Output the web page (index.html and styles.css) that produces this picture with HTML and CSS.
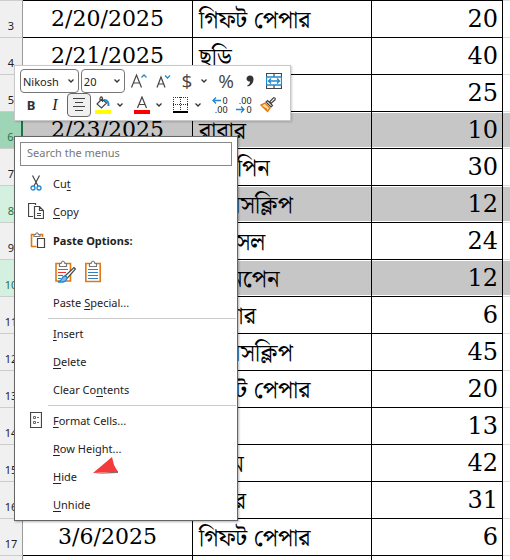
FILE: index.html
```html
<!DOCTYPE html>
<html lang="en">
<head>
<meta charset="utf-8">
<title>Worksheet</title>
<link rel="stylesheet" href="styles.css">
</head>
<body>
<table class="sheet">
<colgroup><col class="c-num"><col class="c-date"><col class="c-item"><col class="c-qty"><col></colgroup>
<tbody>
<tr><th scope="row">3</th><td class="date">2/20/2025</td><td class="item" lang="bn">গিফট পেপার</td><td class="qty">20</td><td class="rest"></td></tr>
<tr><th scope="row">4</th><td class="date">2/21/2025</td><td class="item" lang="bn">ছডি</td><td class="qty">40</td><td class="rest"></td></tr>
<tr><th scope="row">5</th><td class="date"></td><td class="item"></td><td class="qty">25</td><td class="rest"></td></tr>
<tr class="picked current"><th scope="row">6</th><td class="date">2/23/2025</td><td class="item" lang="bn">রাবার</td><td class="qty">10</td><td class="rest"></td></tr>
<tr><th scope="row">7</th><td class="date"></td><td class="item" lang="bn">আলপিন</td><td class="qty">30</td><td class="rest"></td></tr>
<tr class="picked"><th scope="row">8</th><td class="date"></td><td class="item" lang="bn">জেমসক্লিপ</td><td class="qty">12</td><td class="rest"></td></tr>
<tr><th scope="row">9</th><td class="date"></td><td class="item" lang="bn">পেনসল</td><td class="qty">24</td><td class="rest"></td></tr>
<tr class="picked"><th scope="row">10</th><td class="date"></td><td class="item" lang="bn">সাইনপেন</td><td class="qty">12</td><td class="rest"></td></tr>
<tr><th scope="row">11</th><td class="date"></td><td class="item" lang="bn">পেপার</td><td class="qty">6</td><td class="rest"></td></tr>
<tr><th scope="row">12</th><td class="date"></td><td class="item" lang="bn">জেমসক্লিপ</td><td class="qty">45</td><td class="rest"></td></tr>
<tr><th scope="row">13</th><td class="date"></td><td class="item" lang="bn">গিফট পেপার</td><td class="qty">20</td><td class="rest"></td></tr>
<tr><th scope="row">14</th><td class="date"></td><td class="item"></td><td class="qty">13</td><td class="rest"></td></tr>
<tr><th scope="row">15</th><td class="date"></td><td class="item" lang="bn">কলম</td><td class="qty">42</td><td class="rest"></td></tr>
<tr><th scope="row">16</th><td class="date"></td><td class="item" lang="bn">রাবার</td><td class="qty">31</td><td class="rest"></td></tr>
<tr><th scope="row">17</th><td class="date">3/6/2025</td><td class="item" lang="bn">গিফট পেপার</td><td class="qty">6</td><td class="rest"></td></tr>
<tr><th scope="row"></th><td class="date"></td><td class="item"></td><td class="qty"></td><td class="rest"></td></tr>
</tbody>
</table>

<div class="toolbar" role="toolbar" aria-label="Formatting">
  <div class="bar">
    <select class="pick font" aria-label="Font"><option>Nikosh</option></select>
    <select class="pick size" aria-label="Font size"><option>20</option></select>
    <button class="tool" aria-label="Increase font size"><svg width="18" height="18" viewBox="0 0 18 18"><path class="ink" d="M1.500 15.500 6.500 3 11.500 15.500M3.500 11H9.500"/><path class="blue" d="M11.500 5.500 14 3 16.500 5.500"/></svg></button>
    <button class="tool" aria-label="Decrease font size"><svg width="18" height="18" viewBox="0 0 18 18"><path class="ink" d="M3 15.500 7 5 11 15.500M4.500 12H9.500"/><path class="blue" d="M11 3.500 13.500 6 16 3.500"/></svg></button>
    <button class="tool sign" aria-label="Accounting format">$</button>
    <button class="drop" aria-label="Accounting options"><svg width="8" height="6" viewBox="0 0 8 6"><path class="chev" d="M1.500 1.500 4 4 6.500 1.500"/></svg></button>
    <button class="tool sign" aria-label="Percent">%</button>
    <button class="tool" aria-label="Comma style"><svg width="12" height="18" viewBox="0 0 12 18"><path class="solid" d="M6 3.500c-2 0-3.500 1.300-3.500 3.200S4 9.500 6 9.500c0 2-1 3.200-3 4.200l.8.8C7.500 13.500 9.500 10.500 9.500 7 9.500 4.800 8.200 3.500 6 3.500Z"/></svg></button>
    <button class="tool" aria-label="Merge and center"><svg width="16" height="16" viewBox="0 0 16 16"><path class="ink" d="M.5.5H15.500V15.500H.5ZM8 .5V4M8 12V15.500"/><path class="blue fillw" d="M.5 4H15.500V12H.5Z"/><path class="blue" d="M3 8H13M5 5.500 2.500 8 5 10.500M11 5.500 13.500 8 11 10.500"/></svg></button>
  </div>
  <div class="bar">
    <button class="tool bold" aria-label="Bold">B</button>
    <button class="tool italic" aria-label="Italic">I</button>
    <button class="tool pressed" aria-label="Center"><svg width="14" height="14" viewBox="0 0 14 14"><path class="ink" d="M1 .5H13M3 4.500H11M1 8.500H13M3 12.500H11"/></svg></button>
    <button class="tool" aria-label="Fill color"><svg width="18" height="18" viewBox="0 0 18 18"><path class="ink" d="M8 3 3 8 7.500 12 12.500 7 8 3M6 6V2.500Q7-.5 8.500 2V6"/><path class="blue wide" d="M10 4Q15 4 14.500 10"/><path fill="#ff0" d="M1 14H17V18H1Z"/></svg></button>
    <button class="drop" aria-label="Fill options"><svg width="8" height="6" viewBox="0 0 8 6"><path class="chev" d="M1.500 1.500 4 4 6.500 1.500"/></svg></button>
    <button class="tool" aria-label="Font color"><svg width="18" height="18" viewBox="0 0 18 18"><path class="ink" d="M4.500 12 9 1 13.500 12M6 8.500H12"/><path fill="#f00" d="M1 14H17V18H1Z"/></svg></button>
    <button class="drop" aria-label="Font color options"><svg width="8" height="6" viewBox="0 0 8 6"><path class="chev" d="M1.500 1.500 4 4 6.500 1.500"/></svg></button>
    <button class="tool" aria-label="Borders"><svg width="16" height="16" viewBox="0 0 16 16"><path class="dots" d="M.5 0V14M14.500 0V14M0 .5H15M7.500 0V14M0 7.500H15"/><path class="base" d="M0 15H15"/></svg></button>
    <button class="drop" aria-label="Border options"><svg width="8" height="6" viewBox="0 0 8 6"><path class="chev" d="M1.500 1.500 4 4 6.500 1.500"/></svg></button>
    <button class="tool" aria-label="Increase decimal"><span class="dec"><span><svg width="10" height="7" viewBox="0 0 10 7"><path class="blue" d="M9 3.500H1M4 .5 1 3.500 4 6.500"/></svg>0</span><span>.00</span></span></button>
    <button class="tool" aria-label="Decrease decimal"><span class="dec"><span>.00</span><span><svg width="10" height="7" viewBox="0 0 10 7"><path class="blue" d="M0 3.500H8M5 .5 8 3.500 5 6.500"/></svg>0</span></span></button>
    <button class="tool" aria-label="Format painter"><svg width="16" height="16" viewBox="0 0 16 16"><path class="ink fillw" d="M9.500 5 13.500.8Q15.800.5 15 2.800L11 6.500Z"/><path class="ink fillw" d="M7.500 3.500 12.500 8.500 11 10 6 5Z"/><path fill="#fbdca6" stroke="#e07b12" stroke-width="1.400" d="M5 6 10 11 7.500 14.500 1 8Z"/><path fill="#e8790c" d="M2 9.500 7 11.500 7.500 14.500Z"/></svg></button>
  </div>
</div>

<div class="menu">
  <input class="search" type="text" placeholder="Search the menus" aria-label="Search the menus">
  <button class="entry"><svg class="icon" width="12" height="16" viewBox="0 0 12 16"><path class="ink" d="M2.500.5 8 11M9.500.5 4 11"/><circle class="blue fillw" cx="3" cy="13" r="2"/><circle class="blue fillw" cx="9" cy="13" r="2"/></svg><span>Cu<u>t</u></span></button>
  <button class="entry"><svg class="icon wider" width="16" height="16" viewBox="0 0 16 16"><path class="ink" d="M5 13.500H.5V.5H7.500V2"/><path class="ink fillw" d="M6.500 3.500H11.500L15.500 7.500V15.500H6.500ZM11.500 3.500V7.500H15.500"/><path class="ink" d="M9 10.500H13M9 12.500H13"/></svg><span><u>C</u>opy</span></button>
  <div class="entry head"><svg class="icon" width="16" height="16" viewBox="0 0 16 16"><path class="orange" d="M4 2.500H1.500V14.500H6.500M10 2.500H12.500V5"/><path class="grey fillw" d="M4 4.500V2.500H5.500Q7-1 8.500 2.500H10V4.500Z"/><path class="ink fillw" d="M7.500 6.500H14.500V15.500H7.500Z"/></svg><span>Paste Options:</span></div>
  <div class="pastes">
    <button aria-label="Paste"><svg width="21" height="23" viewBox="0 0 21 23"><path class="orange fillw" d="M1 3.500H15.500V21H1Z"/><path class="grey fillw" d="M4.500 6.500V3.500H6Q8-1.500 10 3.500H11.500V6.500Z"/><path class="rule" d="M3 9.500H13M3 18.500H6"/><path class="red" d="M3 12.500H11M3 15.500H8"/><path class="ink fillw" d="M10 16 19 7.500 20.500 9 12.500 18Z"/><path class="blue soft" d="M3 22Q6 21 7 18.500 9 14.500 12 17.500 12 23 3 22Z"/></svg></button>
    <button aria-label="Paste values"><svg width="16" height="23" viewBox="0 0 16 23"><path class="orange fillw" d="M.8 3.500H15.200V21.500H.8Z"/><path class="grey fillw" d="M4.500 6.500V3.500H6Q8-1.500 10 3.500H11.500V6.500Z"/><path class="rule" d="M3 9.500H13M3 12.500H13M3 15.500H13M3 18.500H13"/></svg></button>
  </div>
  <button class="entry"><span>Paste <u>S</u>pecial...</span></button>
  <hr>
  <button class="entry"><span><u>I</u>nsert</span></button>
  <button class="entry"><span><u>D</u>elete</span></button>
  <button class="entry"><span>Clear Co<u>n</u>tents</span></button>
  <hr>
  <button class="entry"><svg class="icon" width="12" height="16" viewBox="0 0 12 16"><path class="ink" d="M.5.5H11.500V15.500H.5Z"/><path class="thin" d="M3.500 4.500H5.500V6.500H3.500ZM3.500 9.500H5.500V11.500H3.500ZM7 5.500H9M7 10.500H9"/></svg><span><u>F</u>ormat Cells...</span></button>
  <button class="entry"><span><u>R</u>ow Height...</span></button>
  <button class="entry"><span><u>H</u>ide</span><svg class="pointer" width="26" height="18" viewBox="0 0 26 18"><path fill="#777" d="M1 17 25 16V14Z"/><path fill="#f33b3b" d="M0 16 19 0 21 8 25 15Z"/></svg></button>
  <button class="entry"><span><u>U</u>nhide</span></button>
</div>
</body>
</html>
```

FILE: styles.css
```css
* { box-sizing: border-box; }
body {
  margin: 0;
  height: 100vh;
  overflow: hidden;
  position: relative;
  background: #fff;
  color: #222;
  font-family: "Noto Sans", "Open Sans", sans-serif;
  font-size: 11px;
}
button { border: 0; padding: 0; background: none; color: inherit; font: inherit; }
svg { display: block; flex: none; }

/* worksheet */
.sheet { width: 100%; table-layout: fixed; border-collapse: separate; border-spacing: 0; }
.c-num { width: 23px; }
.c-date { width: 170px; }
.c-item { width: 179px; }
.c-qty { width: 131px; }
.sheet tr { height: 37px; }
.sheet th, .sheet td { height: 37px; padding: 0; line-height: 32px; vertical-align: middle; white-space: nowrap; }
.sheet th {
  background: #f0f0f0;
  border-top: 1px solid #ccc;
  border-right: 1px solid #999;
  padding-top: 14px;
  font-size: 11px;
  font-weight: 400;
  line-height: 20px;
  text-align: center;
}
.sheet td { border-top: 1px solid #000; border-right: 1px solid #000; color: #000; }
.sheet .rest { border-top-color: #ddd; border-right: 0; }
.date { font-family: "DejaVu Serif", serif; font-size: 22px; text-align: center; }
.item { font-family: "Noto Serif Bengali", "Noto Sans Bengali", "Lohit Bengali", serif; font-size: 24px; }
.sheet .item { padding: 4px 0 0 6px; }
.qty { font-family: "DejaVu Serif", serif; font-size: 24px; text-align: right; }
.sheet .qty { padding-right: 4px; }
.picked td { background: #c6c6c6; box-shadow: inset 0 1px #fff, inset 0 -1px #fff; }
.sheet .picked th { background: #d3f0e0; color: #217346; }
.sheet .current th { background: #9fd5b7; border-right: 2px solid #217346; }

/* floating toolbar */
.toolbar {
  position: absolute;
  left: 14px;
  top: 65px;
  width: 277px;
  padding: 3px 4px;
  border: 1px solid #c8c8c8;
  background: #fff;
  box-shadow: 1px 1px 2px rgba(0, 0, 0, .2);
}
.bar { display: flex; align-items: center; height: 24px; }
.tool, .drop { display: flex; flex: none; align-items: center; justify-content: center; }
.tool { width: 24px; height: 24px; }
.drop { width: 15px; height: 24px; justify-content: flex-start; padding-left: 1px; }
.pick {
  height: 24px;
  padding: 0 2px;
  border: 1px solid #777;
  border-radius: 4px;
  appearance: none;
  background: #fff no-repeat right 3px center / 8px 6px;
  background-image: url("data:image/svg+xml,%3Csvg xmlns='http://www.w3.org/2000/svg' viewBox='0 0 8 6'%3E%3Cpath d='M1.500 1.500 4 4 6.500 1.500' fill='none' stroke='%23333' stroke-width='1.300'/%3E%3C/svg%3E");
  color: #222;
  font: inherit;
}
.font { width: 60px; margin-left: 1px; }
.size { width: 45px; margin: 0 2px; }
.sign { font-family: "Open Sans", sans-serif; font-size: 19px; line-height: 24px; color: #444; }
.bold { font-size: 13px; font-weight: 700; color: #333; }
.italic { font-family: "Liberation Serif", serif; font-size: 16px; font-style: italic; }
.pressed { border: 1px solid #666; border-radius: 4px; background: #f0f0f0; }
.dec { display: grid; font-size: 9px; line-height: 9px; justify-items: end; }
.dec span { display: flex; align-items: center; }

/* context menu */
.menu {
  position: absolute;
  left: 14px;
  top: 136px;
  width: 224px;
  padding: 5px 1px 2px;
  border: 1px solid #666;
  background: #fff;
  box-shadow: 1px 1px 2px rgba(0, 0, 0, .3);
}
.search {
  display: block;
  width: 212px;
  height: 24px;
  margin: 0 4px 3px;
  padding: 0 6px 4px;
  border: 1px solid #888;
  font: inherit;
}
.search::placeholder { color: #777; }
.entry { display: grid; grid-template-columns: 37px auto 1fr; align-items: center; width: 100%; height: 28px; text-align: left; }
.entry span { grid-column: 2; grid-row: 1; }
.entry u { text-underline-offset: 2px; }
.icon { grid-column: 1; grid-row: 1; margin-left: 14px; }
.wider { margin-left: 12px; }
.head { height: 30px; font-weight: 700; }
.pastes { display: flex; gap: 9px; height: 33px; padding-left: 39px; align-items: center; }
.menu hr { height: 1px; margin: 2px 0 0 32px; border: 0; background: #ccc; }
.pointer { grid-column: 3; grid-row: 1; align-self: start; margin: -5px 0 0 16px; }

/* icon strokes */
.ink { fill: none; stroke: #444; stroke-width: 1.2; }
.blue { fill: none; stroke: #2288cc; stroke-width: 1.3; }
.wide { stroke-width: 2; }
.orange { fill: none; stroke: #dd7a12; stroke-width: 1.6; }
.grey { fill: none; stroke: #777; stroke-width: 1.2; }
.rule { fill: none; stroke: #2f80bb; stroke-width: 1; }
.red { fill: none; stroke: #e33; stroke-width: 1; }
.thin { fill: none; stroke: #666; stroke-width: 1; }
.chev { fill: none; stroke: #333; stroke-width: 1.3; }
.solid { fill: #333; }
.dots { fill: none; stroke: #333; stroke-width: 1; stroke-dasharray: 1 1; }
.base { fill: none; stroke: #000; stroke-width: 2; }
.fillw { fill: #fff; }
.soft { fill: #83bbe6; }
```
